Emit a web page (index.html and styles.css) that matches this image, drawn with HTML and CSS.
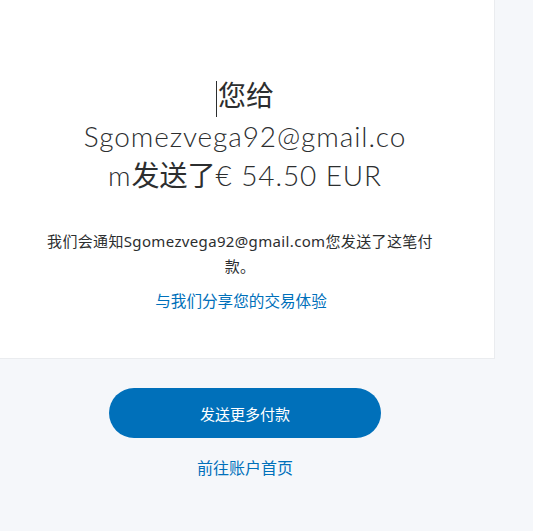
FILE: index.html
```html
<!DOCTYPE html>
<html lang="zh-CN">
<head>
  <meta charset="UTF-8">
  <title>付款已发送</title>
  <link rel="stylesheet" href="styles.css">
</head>
<body>
  <!-- 付款完成卡片 -->
  <div class="card">
    <h1 class="title"><span class="caret"></span><span class="cjk">您给</span> Sgomezvega92@gmail.com<span class="cjk">发送了</span>€ 54.50 EUR</h1>
    <p class="note">我们会通知Sgomezvega92@gmail.com您发送了这笔付款。</p>
    <a class="link share" href="#">与我们分享您的交易体验</a>
  </div>

  <!-- 操作按钮 -->
  <div class="actions">
    <button class="btn-primary">发送更多付款</button>
    <a class="link home" href="#">前往账户首页</a>
  </div>
</body>
</html>
```

FILE: styles.css
```css
/* 基本レイアウト */
body {
  margin: 0;
  background: #f5f7fa;
  font-family: "Noto Sans", "Noto Sans CJK SC", sans-serif;
  color: #2c2e2f;
}
.card {
  width: 495px;
  height: 359px;
  background: #fff;
  border-right: 1px solid #eaecef;
  border-bottom: 1px solid #eaecef;
  padding-top: 76px;
  box-sizing: border-box;
  display: flex;
  flex-direction: column;
  align-items: center;
}
.title {
  width: 340px;
  margin: 0 4px 0 0;
  font-family: Lato, "Noto Sans CJK SC", sans-serif;
  font-weight: 300;
  font-size: 28px;
  line-height: 39px;
  letter-spacing: 0.9px;
  text-align: center;
  overflow-wrap: break-word;
}
.cjk {
  font-weight: 400;
  letter-spacing: 0;
}
.caret {
  display: inline-block;
  width: 1px;
  height: 36px;
  background: #2c2e2f;
  vertical-align: middle;
  margin-right: 1px;
}
.note {
  width: 400px;
  margin: 34px 14px 0 0;
  font-size: 15px;
  line-height: 25px;
  letter-spacing: 0.35px;
  text-align: center;
}
.link {
  color: #0070ba;
  text-decoration: none;
  font-size: 15.6px;
  line-height: 22px;
}
.share {
  margin: 11px 12px 0 0;
}
/* 按钮区域 */
.actions {
  width: 490px;
  display: flex;
  flex-direction: column;
  align-items: center;
  padding-top: 29px;
}
.btn-primary {
  width: 272px;
  height: 50px;
  border: none;
  border-radius: 25px;
  background: #0070ba;
  color: #fff;
  font-family: "Noto Sans", "Noto Sans CJK SC", sans-serif;
  font-size: 15px;
  cursor: pointer;
}
.home {
  margin-top: 19px;
  font-size: 16px;
}
```
